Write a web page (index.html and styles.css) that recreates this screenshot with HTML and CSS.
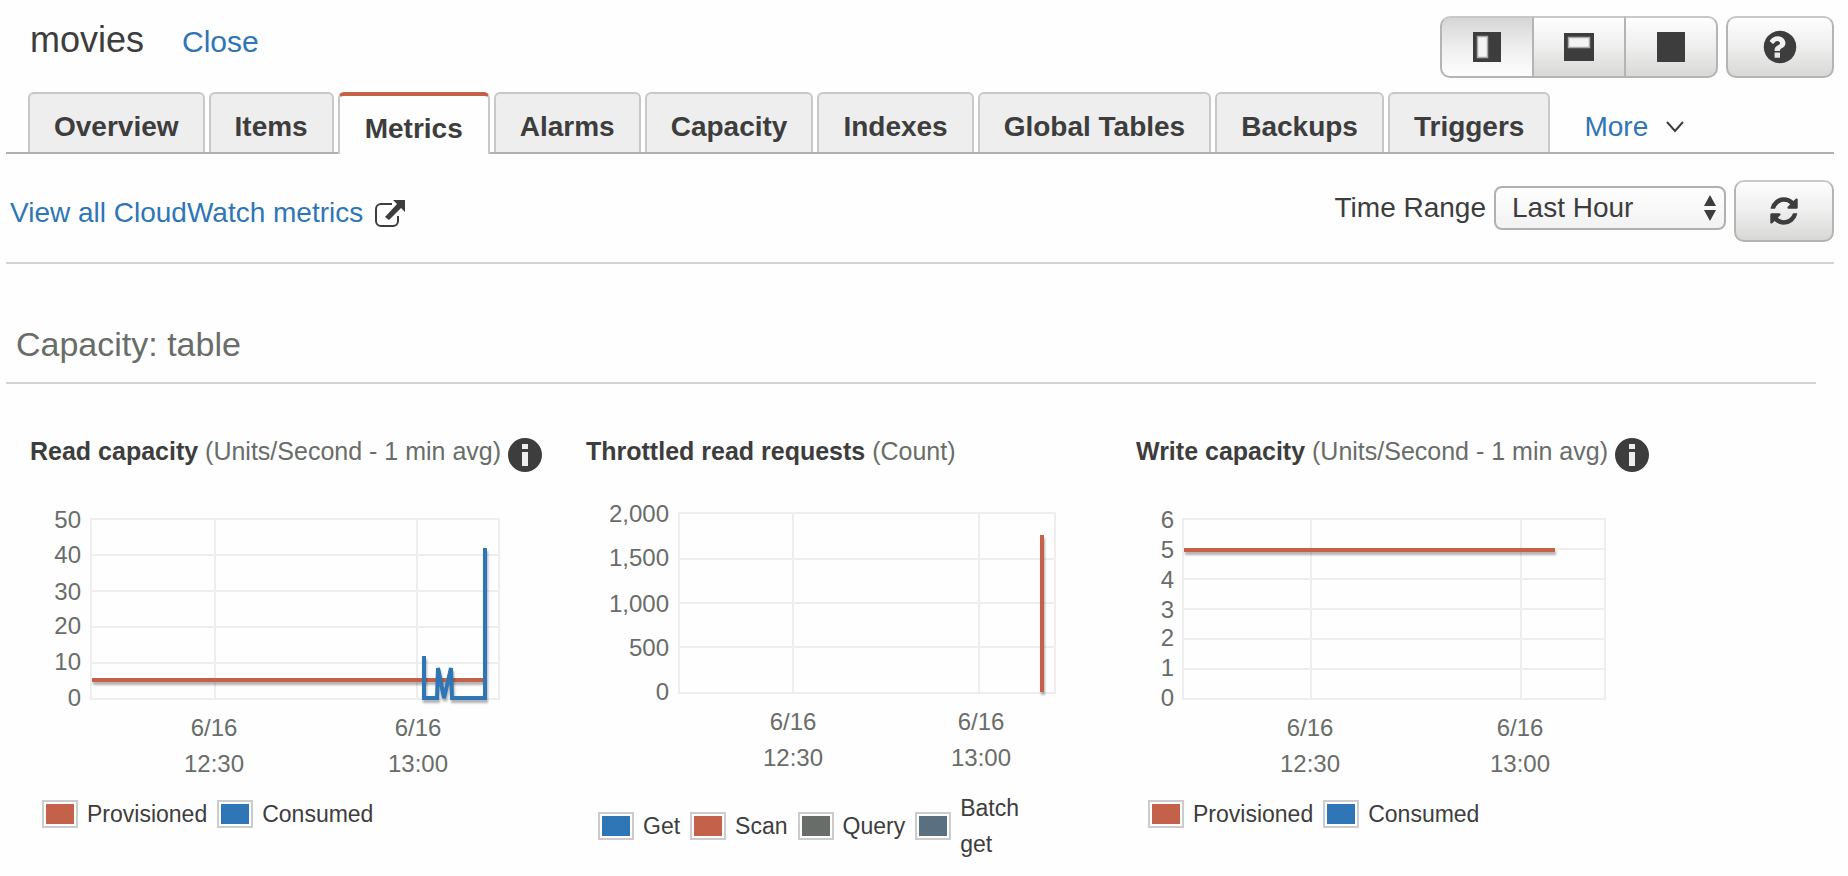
FILE: index.html
```html
<!DOCTYPE html>
<html lang="en">
<head>
<meta charset="utf-8">
<title>movies - Metrics</title>
<link rel="stylesheet" href="styles.css">
</head>
<body>
<header class="topbar">
  <div class="heading">
    <h1 class="title">movies</h1>
    <a class="link close" href="#">Close</a>
  </div>
  <div class="actions">
    <div class="btn-group">
      <button class="btn btn-active" type="button" aria-label="Split left">
        <svg width="28" height="30" viewBox="0 0 28 30"><path fill="#3d3d3d" d="M0 0h28v30H0z"/><path fill="#f4f4f4" stroke="#aaa" stroke-width="1.5" d="M4.500 4.500h10v21h-10z"/></svg>
      </button>
      <button class="btn" type="button" aria-label="Split top">
        <svg width="30" height="28" viewBox="0 0 30 28"><path fill="#3d3d3d" d="M0 0h30v28H0z"/><path fill="#f4f4f4" stroke="#aaa" stroke-width="1.5" d="M4.500 4.500h21v10h-21z"/></svg>
      </button>
      <button class="btn" type="button" aria-label="Full view">
        <svg width="28" height="30" viewBox="0 0 28 30"><path fill="#3d3d3d" d="M0 0h28v30H0z"/></svg>
      </button>
    </div>
    <button class="btn btn-help" type="button" aria-label="Help">
      <svg width="38" height="38" viewBox="0 0 1792 1792"><path fill="#3d3d3d" d="M896 1376v-192q0-14-9-23t-23-9h-192q-14 0-23 9t-9 23v192q0 14 9 23t23 9h192q14 0 23-9t9-23zM1152 704q0-88-55.500-163t-138.500-116-170-41q-243 0-371 213-15 24 8 42l132 100q7 6 19 6 16 0 25-12 53-68 86-92 34-24 86-24 48 0 85.500 26t37.500 59q0 38-20 61t-68 45q-63 28-115.500 86.500t-52.500 125.500v36q0 14 9 23t23 9h192q14 0 23-9t9-23q0-19 21.500-49.500t54.500-49.500q32-18 49-28.500t46-35 44.500-48 28-60.500 12.500-81zM1664 896q0 209-103 385.500t-279.500 279.500-385.500 103-385.500-103-279.500-279.500-103-385.500 103-385.500 279.500-279.500 385.500-103 385.500 103 279.500 279.500 103 385.500z"/></svg>
    </button>
  </div>
</header>

<nav class="tabs">
  <a class="tab" href="#">Overview</a>
  <a class="tab" href="#">Items</a>
  <a class="tab tab-active" href="#" aria-current="page">Metrics</a>
  <a class="tab" href="#">Alarms</a>
  <a class="tab" href="#">Capacity</a>
  <a class="tab" href="#">Indexes</a>
  <a class="tab" href="#">Global Tables</a>
  <a class="tab" href="#">Backups</a>
  <a class="tab" href="#">Triggers</a>
  <button class="more" type="button">More
    <svg width="18" height="12" viewBox="0 0 18 12"><path d="M1 1l8 9 8-9" fill="none" stroke="#3d3d3d" stroke-width="2"/></svg>
  </button>
</nav>

<div class="toolbar">
  <a class="link cloudwatch" href="#">View all CloudWatch metrics
    <svg width="30" height="27" viewBox="0 0 30 27"><path d="M17 4H6a5 5 0 0 0-5 5v12a5 5 0 0 0 5 5h12a5 5 0 0 0 5-5v-5" fill="none" stroke="#3d3d3d" stroke-width="2"/><path d="M18 0h12v12l-4-4-12 12-4-3L22 4z" fill="#3d3d3d"/></svg>
  </a>
  <div class="range">
    <div class="range-field">
      <label for="range">Time Range</label>
      <div class="select-wrap">
        <select id="range" class="select"><option>Last Hour</option></select>
        <svg class="select-arrows" width="14" height="26" viewBox="0 0 14 26"><path fill="#3d3d3d" d="M7 0l6 11H1zM7 26L1 15h12z"/></svg>
      </div>
    </div>
    <button class="btn btn-refresh" type="button" aria-label="Refresh">
      <svg width="32" height="32" viewBox="0 0 1792 1792"><path fill="#3d3d3d" d="M1639 1056q0 5-1 7-64 268-268 434.500t-478 166.500q-146 0-282.500-55t-243.500-157l-129 129q-19 19-45 19t-45-19-19-45v-448q0-26 19-45t45-19h448q26 0 45 19t19 45-19 45l-137 137q71 66 161 102t187 36q134 0 250-65t186-179q11-17 53-117 8-23 30-23h192q13 0 22.500 9.500t9.500 22.500zM1664 256v448q0 26-19 45t-45 19h-448q-26 0-45-19t-19-45 19-45l138-138q-148-137-349-137-134 0-250 65t-186 179q-11 17-53 117-8 23-30 23h-199q-13 0-22.500-9.500t-9.500-22.500v-7q65-268 270-434.500t480-166.500q146 0 284 55.500t245 156.500l130-129q19-19 45-19t45 19 19 45z"/></svg>
    </button>
  </div>
</div>

<main class="content">
  <h2 class="section-title">Capacity: table</h2>
  <div class="charts">
    <section class="chart">
      <h3 class="chart-title"><span><b>Read capacity</b> (Units/Second - 1 min avg)</span>
        <svg class="info" width="34" height="34" viewBox="0 0 34 34"><circle cx="17" cy="17" r="17" fill="#3d3d3d"/><path fill="#eee" d="M14 6h6v5h-6zM14 14h6v14h-6z"/></svg>
      </h3>
      <svg class="plot" width="500" height="280" viewBox="0 0 500 280">
        <path class="grid" d="M61 19h408M61 55h408M61 91h408M61 127h408M61 163h408M61 199h408M61 18v182M185 19v180M387 19v180M469 18v182"/>
        <g class="y-labels"><text x="51" y="28">50</text><text x="51" y="63">40</text><text x="51" y="100">30</text><text x="51" y="134">20</text><text x="51" y="170">10</text><text x="51" y="206">0</text></g>
        <g class="x-labels"><text x="184" y="236">6/16</text><text x="184" y="272">12:30</text><text x="388" y="236">6/16</text><text x="388" y="272">13:00</text></g>
        <path class="line red" d="M62 180h393"/>
        <path class="line blue" d="M394 156v42h13l1-30 6 30 7-30 1 30h33V48"/>
      </svg>
      <ul class="legend"><li><i class="swatch red"></i>Provisioned</li><li><i class="swatch blue"></i>Consumed</li></ul>
    </section>

    <section class="chart">
      <h3 class="chart-title"><span><b>Throttled read requests</b> (Count)</span></h3>
      <svg class="plot" width="500" height="274" viewBox="0 0 500 274">
        <path class="grid" d="M93 13h376M93 59h376M93 103h376M93 147h376M93 193h376M93 12v182M207 13v180M393 13v180M469 12v182"/>
        <g class="y-labels"><text x="83" y="22">2,000</text><text x="83" y="66">1,500</text><text x="83" y="112">1,000</text><text x="83" y="156">500</text><text x="83" y="200">0</text></g>
        <g class="x-labels"><text x="207" y="230">6/16</text><text x="207" y="266">12:30</text><text x="395" y="230">6/16</text><text x="395" y="266">13:00</text></g>
        <path class="line red" d="M456 35v157"/>
      </svg>
      <ul class="legend"><li><i class="swatch blue"></i>Get</li><li><i class="swatch red"></i>Scan</li><li><i class="swatch gray"></i>Query</li><li class="legend-wrap"><i class="swatch slate"></i>Batch get</li></ul>
    </section>

    <section class="chart">
      <h3 class="chart-title"><span><b>Write capacity</b> (Units/Second - 1 min avg)</span>
        <svg class="info" width="34" height="34" viewBox="0 0 34 34"><circle cx="17" cy="17" r="17" fill="#3d3d3d"/><path fill="#eee" d="M14 6h6v5h-6zM14 14h6v14h-6z"/></svg>
      </h3>
      <svg class="plot" width="500" height="280" viewBox="0 0 500 280">
        <path class="grid" d="M47 19h422M47 49h422M47 79h422M47 109h422M47 139h422M47 169h422M47 199h422M47 18v182M175 19v180M385 19v180M469 18v182"/>
        <g class="y-labels"><text x="38" y="28">6</text><text x="38" y="58">5</text><text x="38" y="88">4</text><text x="38" y="118">3</text><text x="38" y="146">2</text><text x="38" y="176">1</text><text x="38" y="206">0</text></g>
        <g class="x-labels"><text x="174" y="236">6/16</text><text x="174" y="272">12:30</text><text x="384" y="236">6/16</text><text x="384" y="272">13:00</text></g>
        <path class="line red" d="M48 50h371"/>
      </svg>
      <ul class="legend"><li><i class="swatch red"></i>Provisioned</li><li><i class="swatch blue"></i>Consumed</li></ul>
    </section>
  </div>
</main>
</body>
</html>
```

FILE: styles.css
```css
* { box-sizing: border-box; }
body {
  margin: 0;
  padding: 0 14px 0 6px;
  background: #fefefe;
  color: #3d3d3d;
  font: 28px/36px "Liberation Sans", Arial, sans-serif;
}
svg { display: block; flex: none; }
h1, h2, h3, ul { margin: 0; padding: 0; font-weight: normal; }
.link { color: #2e76b6; text-decoration: none; }

.topbar { display: flex; justify-content: space-between; padding: 16px 0 14px 24px; }
.heading { display: flex; align-items: baseline; gap: 38px; }
.title { font-size: 36px; line-height: 48px; }
.close { font-size: 30px; }
.actions { display: flex; gap: 8px; }

.btn {
  display: flex;
  align-items: center;
  justify-content: center;
  height: 62px;
  padding: 0;
  border: 2px solid #b4b4b4;
  border-top-color: #c8c8c8;
  border-radius: 10px;
  background: linear-gradient(#fefefe, #eee 50%, #d8d8d6);
}
.btn-group { display: flex; }
.btn-group .btn { width: 94px; border-radius: 0; }
.btn-group .btn + .btn { margin-left: -2px; }
.btn-group .btn:first-child { border-radius: 10px 0 0 10px; }
.btn-group .btn:last-child { border-radius: 0 10px 10px 0; }
.btn-group .btn-active { background: linear-gradient(#d6d6d6, #eee 50%, #fefefe); }
.btn-help { width: 108px; }
.btn-refresh { width: 100px; }

.tabs {
  display: flex;
  align-items: flex-end;
  gap: 4px;
  padding-left: 22px;
  border-bottom: 2px solid #b0b0b0;
}
.tab {
  padding: 10px 24px 2px;
  border: 2px solid #c8c8c8;
  border-bottom: 0;
  border-radius: 6px 6px 0 0;
  background: #eee;
  color: #3d3d3d;
  font-weight: bold;
  line-height: 46px;
  text-decoration: none;
  white-space: nowrap;
}
.tab-active {
  position: relative;
  margin-bottom: -2px;
  padding: 10px 25px 2px;
  border-top: 4px solid #c4614a;
  background: #fefefe;
}
.more {
  display: flex;
  align-items: center;
  gap: 18px;
  padding: 10px 30px 2px;
  border: 0;
  background: none;
  color: #2e76b6;
  font: 28px/46px "Liberation Sans", Arial, sans-serif;
}

.toolbar {
  display: flex;
  align-items: center;
  justify-content: space-between;
  padding: 26px 0 20px 4px;
  border-bottom: 2px solid #d4d4d4;
}
.cloudwatch { display: flex; align-items: center; gap: 12px; padding-top: 4px; }
.range { display: flex; align-items: center; gap: 8px; }
.range-field { display: flex; align-items: center; gap: 8px; padding-bottom: 6px; }
.select-wrap { position: relative; }
.select {
  appearance: none;
  width: 232px;
  height: 44px;
  padding: 0 40px 0 16px;
  border: 2px solid #b0b0b0;
  border-radius: 8px;
  background: linear-gradient(#fefefe, #f2f2f2);
  color: #3d3d3d;
  font: 28px/36px "Liberation Sans", Arial, sans-serif;
}
.select-arrows { position: absolute; top: 9px; right: 9px; pointer-events: none; }

.section-title {
  margin-right: 18px;
  padding: 60px 0 18px 10px;
  border-bottom: 2px solid #d4d4d4;
  color: #696d69;
  font-size: 34px;
  line-height: 40px;
}
.charts {
  display: grid;
  grid-template-columns: 556fr 550fr 698fr;
  padding: 51px 0 0 24px;
}
.chart-title {
  display: flex;
  align-items: flex-start;
  gap: 7px;
  min-height: 38px;
  color: #696d69;
  font-size: 25px;
  line-height: 32px;
  white-space: nowrap;
}
.chart-title b { color: #3d3d3d; }
.info { margin-top: 3px; }
.plot { margin: 27px 0 16px; font-size: 24px; fill: #696d69; }
.y-labels { text-anchor: end; }
.x-labels { text-anchor: middle; }
.grid { fill: none; stroke: #eee; stroke-width: 2; }
.line {
  fill: none;
  stroke-width: 4;
  filter: drop-shadow(1px 3px 1px rgba(0, 0, 0, 0.3));
}
.line.red { stroke: #c4614a; }
.line.blue { stroke: #2e76b6; }

.legend {
  display: flex;
  align-items: center;
  gap: 10px;
  padding-left: 12px;
  font-size: 23px;
  list-style: none;
}
.legend li { display: flex; align-items: center; gap: 9px; }
.legend-wrap { width: 116px; }
.swatch {
  flex: none;
  width: 36px;
  height: 28px;
  padding: 2px;
  border: 2px solid #ccc;
  background-clip: content-box;
}
.swatch.red { background-color: #c4614a; }
.swatch.blue { background-color: #2e76b6; }
.swatch.gray { background-color: #696d69; }
.swatch.slate { background-color: #5a6f80; }
```
